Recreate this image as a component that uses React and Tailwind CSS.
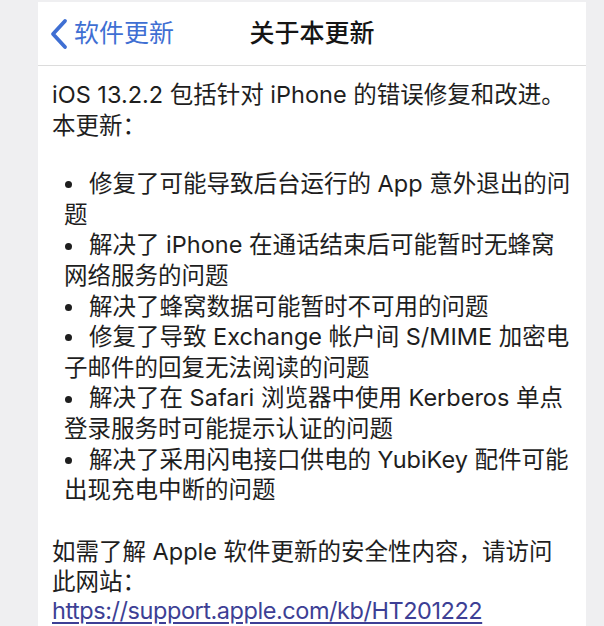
import React from "react";

export default function App() {
  const lines = [
    { b: true, t: "修复了可能导致后台运行的 App 意外退出的问" },
    { b: false, t: "题" },
    { b: true, t: "解决了 iPhone 在通话结束后可能暂时无蜂窝" },
    { b: false, t: "网络服务的问题" },
    { b: true, t: "解决了蜂窝数据可能暂时不可用的问题" },
    { b: true, t: "修复了导致 Exchange 帐户间 S/MIME 加密电" },
    { b: false, t: "子邮件的回复无法阅读的问题" },
    { b: true, t: "解决了在 Safari 浏览器中使用 Kerberos 单点" },
    { b: false, t: "登录服务时可能提示认证的问题" },
    { b: true, t: "解决了采用闪电接口供电的 YubiKey 配件可能" },
    { b: false, t: "出现充电中断的问题" },
  ];
  return (
    <div className="w-[604px] h-[626px] bg-[#efeff1] overflow-hidden pt-[2px] font-[Inter,'Noto_Sans_CJK_SC',sans-serif]">
      <div className="ml-[38px] w-[548px] h-full bg-white">
        <div className="h-[64px] grid grid-cols-[1fr_auto_1fr] items-center border-b border-[#dcdcdc]">
          <div className="flex items-center pl-[11px] text-[#3f6fd3]">
            <svg width="20" height="32" viewBox="0 0 20 32" className="shrink-0">
              <path d="M16 3 L4 16 L16 29" fill="none" stroke="#3f6fd3" strokeWidth="3.8" strokeLinecap="round" strokeLinejoin="round" />
            </svg>
            <span className="ml-[5px] text-[25px] leading-none whitespace-nowrap">软件更新</span>
          </div>
          <div className="text-[25px] font-medium text-[#151515] leading-none whitespace-nowrap">关于本更新</div>
          <div></div>
        </div>
        <div className="pl-[14px] pt-[14px] text-[23.5px] leading-[30.6px] text-[#1e1e1e] whitespace-nowrap">
          <div>iOS 13.2.2 包括针对 iPhone 的错误修复和改进。</div>
          <div>本更新：</div>
          <div className="mt-[28px] pl-[12px]">
            {lines.map((l, i) => (
              <div key={i} className="flex items-center">
                {l.b && <span className="ml-[1px] mr-[17px] mt-[1px] w-[7px] h-[7px] rounded-full bg-[#1e1e1e] shrink-0"></span>}
                <span>{l.t}</span>
              </div>
            ))}
          </div>
          <div className="mt-[31px]">如需了解 Apple 软件更新的安全性内容，请访问</div>
          <div className="leading-[29px]">此网站：</div>
          <div className="leading-[29px] text-[#3d3f95] underline underline-offset-[3px] tracking-[-0.45px]">https://support.apple.com/kb/HT201222</div>
        </div>
      </div>
    </div>
  );
}
